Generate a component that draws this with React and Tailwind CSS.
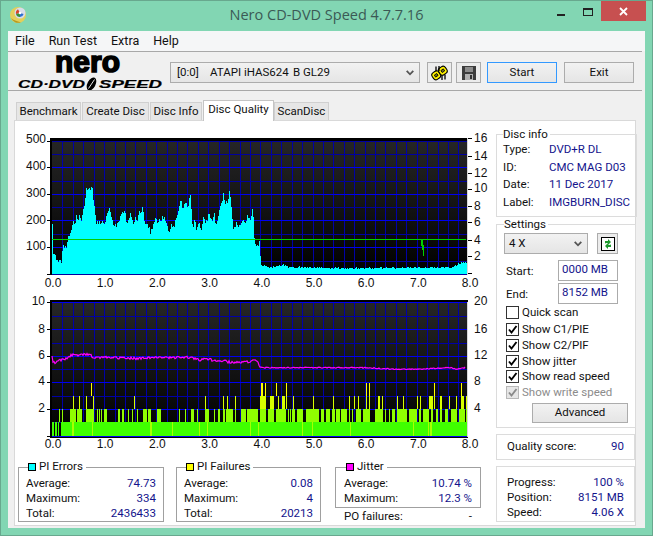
import React from "react";

function rng(seed) {
  let s = seed;
  return () => {
    s = (s * 1664525 + 1013904223) % 4294967296;
    return s / 4294967296;
  };
}
function interp(pts, x) {
  if (x <= pts[0][0]) return pts[0][1];
  for (let i = 1; i < pts.length; i++) {
    if (x <= pts[i][0]) {
      const [a, b] = pts[i - 1];
      const [c, d] = pts[i];
      return b + ((d - b) * (x - a)) / (c - a || 1);
    }
  }
  return pts[pts.length - 1][1];
}

const cyanA = [[110,275],[112,275],[114,380],[118,385],[122,395],[126,405],[130,408],[136,410],[140,415],[144,355],[148,375],[152,370],[156,360],[160,335],[165,330],[170,310],[176,292],[182,295],[186,268],[190,295],[194,265],[198,295],[202,275],[206,245],[210,235],[214,183],[218,200],[224,195],[228,202],[232,180],[236,235],[240,258],[244,300],[250,290],[256,300],[262,290],[270,293],[276,265],[282,250],[288,270],[294,298],[298,310],[304,300],[312,288],[320,265],[326,262],[332,262],[336,298],[342,275],[350,268],[356,295],[362,280],[368,288],[374,262],[380,268],[384,245],[390,300],[396,303],[402,305],[408,325],[414,300],[424,280],[430,292],[440,280],[450,275],[456,302],[462,328],[468,304],[478,300],[484,282],[490,255],[498,226],[504,258],[510,240],[520,240],[526,210],[530,255],[534,320],[538,285],[544,310],[552,285],[558,320],[566,280],[574,290],[582,268],[590,290],[598,268],[604,305],[612,265],[620,240],[626,205],[632,235],[638,230],[644,200],[650,245],[654,312],[660,310],[664,288],[672,310],[680,295],[690,290],[700,270],[706,285],[714,240],[718,345],[724,355],[730,360],[734,345],[738,415],[745,420],[750,425]];
const cyanB = [[0,290],[10,240],[14,350],[20,355],[28,360],[32,412],[45,420],[55,428],[100,420],[115,426],[300,430],[450,428],[560,428],[610,426],[635,412],[650,415],[655,415]];

function cyanPath() {
  const r = rng(17);
  const pts = [...cyanA.map(([a, b]) => [15 + a / 3, 125 + b / 3]), ...cyanB.map(([a, b]) => [250 + a / 3, 125 + b / 3])];
  let d = "M52 274";
  for (let x = 52; x < 468; x++) {
    const y = Math.round(interp(pts, x + 0.5) + (r() - 0.5) * (x > 262 ? 1.6 : 5));
    d += `V${y}H${x + 1}`;
  }
  return d + "V274Z";
}

const magA = [[110,195],[114,215],[120,218],[130,212],[150,208],[165,198],[175,192],[190,195],[215,192],[228,195],[235,205],[260,203],[300,203],[360,205],[420,203],[480,203],[530,202],[550,210],[580,207],[600,213],[625,212],[650,218],[700,215],[725,210],[735,232],[750,234]];
const magB = [[0,212],[22,210],[30,232],[60,233],[200,233],[350,233],[400,236],[460,238],[520,237],[600,233],[620,237],[648,232]];
function magPath() {
  const r = rng(5);
  const pts = [...magA.map(([a, b]) => [15 + a / 3, 290 + b / 3]), ...magB.filter((p) => p[0] > 10).map(([a, b]) => [250 + a / 3, 290 + b / 3])];
  let d = "";
  for (let x = 52; x < 466; x++) {
    const amp = x < 262 ? 2.4 : 1;
    const y = interp(pts, x) + (r() - 0.5) * amp;
    d += `${x === 52 ? "M" : "L"}${x} ${y.toFixed(1)}`;
  }
  return d;
}

const L2a = [[132,135],[141,144],[164,182],[186,200],[213,237],[246,249],[252,255],[258,261],[267,276],[309,315],[321,327],[339,342],[351,354],[366,369],[384,396],[399,408],[426,438],[492,495],[510,513],[528,537],[546,549],[570,582],[597,600],[609,615],[624,630],[633,654],[660,663],[678,693],[696,705],[711,717],[723,726],[735,750]];
const L3a = [[174,177],[192,195],[213,216],[234,237],[357,360],[570,573],[624,627],[636,639],[660,663],[735,750]];
const L4a = [[228,231],[738,744]];
const L2b = [[0,24],[30,39],[42,48],[54,72],[78,108],[114,117],[120,123],[126,135],[141,159],[168,207],[213,222],[228,240],[246,255],[258,270],[273,291],[297,300],[306,309],[318,333],[339,360],[375,399],[405,408],[417,420],[426,435],[441,471],[477,501],[507,513],[519,537],[543,549],[558,564],[570,576],[585,595],[603,621],[627,645],[648,654]];
const L3b = [[30,39],[42,48],[60,72],[84,87],[96,105],[108,111],[129,132],[189,192],[249,252],[297,300],[312,315],[324,327],[348,351],[357,360],[384,390],[396,399],[441,444],[459,462],[501,504],[510,513],[537,549],[552,555],[570,576],[597,600],[618,621],[633,642],[648,651]];
const L4b = [[33,39],[45,48],[78,81],[108,111],[348,351],[357,360],[552,555],[633,636]];

function Bars({ a, b, y, h, fill }) {
  return (
    <g fill={fill} shapeRendering="crispEdges">
      {a.map(([s, e], i) => (
        <rect key={"a" + i} x={Math.round(15 + s / 3)} y={y} width={Math.max(1, Math.round((e - s) / 3))} height={h} />
      ))}
      {b.map(([s, e], i) => (
        <rect key={"b" + i} x={Math.round(250 + s / 3)} y={y} width={Math.max(1, Math.round((e - s) / 3))} height={h} />
      ))}
    </g>
  );
}

function Grid({ id, ys }) {
  const xs = [];
  for (let i = 1; i < 40; i++) xs.push(52 + i * 10.42);
  return (
    <g shapeRendering="crispEdges">
      {xs.map((x) => (
        <line key={x} x1={Math.round(x)} x2={Math.round(x)} y1={ys[0]} y2={ys[ys.length - 1]} stroke="#0000a8" />
      ))}
      {ys.map((y, i) => (
        <line key={y} x1="52" x2="468" y1={y} y2={y} stroke={id === "a" ? (i % 2 === 0 && i > 0 && i < 10 ? "#0000f0" : "#0000a0") : i % 2 === 0 ? "#0000f0" : "#0000a8"} />
      ))}
    </g>
  );
}

function AxisText({ x, y, anchor = "start", children }) {
  return (
    <text x={x} y={y} textAnchor={anchor} dominantBaseline="central" fontSize="12" fill="#111" fontFamily="'Liberation Sans', Arial, sans-serif">
      {children}
    </text>
  );
}

const xLabels = ["0.0", "1.0", "2.0", "3.0", "4.0", "5.0", "6.0", "7.0"];

function Chart1() {
  const ys = [141, 154, 167, 181, 194, 207, 220, 234, 247, 261, 274];
  return (
    <svg viewBox="15 121 478 172" className="block h-[172px] w-[478px]">
      <defs>
        <linearGradient id="bgA" x1="0" y1="0" x2="0" y2="1">
          <stop offset="0" stopColor="#262626" />
          <stop offset="1" stopColor="#000" />
        </linearGradient>
      </defs>
      <rect x="50" y="138" width="418" height="137" fill="#000" shapeRendering="crispEdges" />
      <rect x="52" y="141" width="416" height="133" fill="url(#bgA)" shapeRendering="crispEdges" />
      <Grid id="a" ys={ys} />
      <path d={cyanPath()} fill="#00ffff" shapeRendering="crispEdges" />
      <rect x="52" y="239" width="414" height="1" fill="#00d000" shapeRendering="crispEdges" />
      <path d="M421 239h2v6h1v11h-1v-6h-1v-4h-1z" fill="#00d000" shapeRendering="crispEdges" />
      <rect x="467" y="138" width="1" height="137" fill="#d8d8d8" shapeRendering="crispEdges" />
      <g stroke="#000" shapeRendering="crispEdges">
        {[141, 167, 194, 220, 247, 274].map((y) => <line key={y} x1="47" x2="50" y1={y} y2={y} />)}
        {[138, 156, 173, 189, 206, 222, 240, 256, 273].map((y) => <line key={y} x1="468" x2="472" y1={y} y2={y} />)}
      </g>
      {[["500", 139], ["400", 166], ["300", 193], ["200", 220], ["100", 246]].map(([t, y]) => (
        <AxisText key={t} x={46} y={y} anchor="end">{t}</AxisText>
      ))}
      {[["16", 138], ["14", 156], ["12", 173], ["10", 188], ["8", 206], ["6", 222], ["4", 240], ["2", 256]].map(([t, y]) => (
        <AxisText key={t} x={474} y={y}>{t}</AxisText>
      ))}
      {xLabels.map((t, i) => (
        <AxisText key={t} x={53 + i * 52.2} y={283} anchor="middle">{t}</AxisText>
      ))}
      <AxisText x={470} y={283} anchor="middle">8.0</AxisText>
    </svg>
  );
}

function Chart2() {
  const ys = [302, 316, 329, 343, 356, 369, 382, 396, 409, 422, 436];
  return (
    <svg viewBox="15 293 478 167" className="block h-[167px] w-[478px]">
      <defs>
        <linearGradient id="bgB" x1="0" y1="0" x2="0" y2="1">
          <stop offset="0" stopColor="#262626" />
          <stop offset="1" stopColor="#000" />
        </linearGradient>
      </defs>
      <rect x="50" y="300" width="418" height="138" fill="#000" shapeRendering="crispEdges" />
      <rect x="52" y="303" width="416" height="133" fill="url(#bgB)" shapeRendering="crispEdges" />
      <Grid id="b" ys={ys} />
      <Bars a={L4a} b={L4b} y={383} h={13} fill="#ffff00" />
      <Bars a={L3a} b={L3b} y={396} h={13} fill="#d8ff00" />
      <Bars a={L2a} b={L2b} y={409} h={13} fill="#90ff00" />
      <g fill="#40ff00" shapeRendering="crispEdges">
        <rect x="52" y="422" width="2" height="14" />
        <rect x="55" y="422" width="2" height="14" />
        <rect x="58" y="422" width="1" height="14" />
        <rect x="61" y="422" width="407" height="14" />
      </g>
      <g fill="#a8ff00" shapeRendering="crispEdges">
        {[72, 73, 92, 150, 151, 172, 199, 207, 250, 258, 302, 312, 350, 430, 431, 413, 428].map((x) => (
          <rect key={x} x={x} y="422" width="1" height="14" />
        ))}
      </g>
      <path d={magPath()} fill="none" stroke="#ff00ff" strokeWidth="1.2" />
      <rect x="467" y="302" width="1" height="135" fill="#d8d8d8" shapeRendering="crispEdges" />
      <g stroke="#000" shapeRendering="crispEdges">
        {ys.filter((_, i) => i % 2 === 0).map((y) => <line key={y} x1="47" x2="50" y1={y} y2={y} />)}
      </g>
      {[["10", 301], ["8", 329], ["6", 355], ["4", 381], ["2", 408]].map(([t, y]) => (
        <AxisText key={t} x={45} y={y} anchor="end">{t}</AxisText>
      ))}
      {[["20", 301], ["16", 329], ["12", 355], ["8", 381], ["4", 408]].map(([t, y]) => (
        <AxisText key={t} x={474} y={y}>{t}</AxisText>
      ))}
      {xLabels.map((t, i) => (
        <AxisText key={t} x={53 + i * 52.2} y={444} anchor="middle">{t}</AxisText>
      ))}
      <AxisText x={470} y={444} anchor="middle">8.0</AxisText>
    </svg>
  );
}

function Logo() {
  return (
    <svg viewBox="15 52 155 38" className="-mt-[3px] block h-[38px] w-[155px] shrink-0 self-start overflow-visible">
      <text x="55" y="72" fontSize="30" fontWeight="700" stroke="#000" strokeWidth="1.6" textLength="65" lengthAdjust="spacingAndGlyphs" fontFamily="'Liberation Sans', Arial, sans-serif">nero</text>
      <text x="18" y="88" fontSize="11.5" fontWeight="700" fontStyle="italic" stroke="#000" strokeWidth="0.2" textLength="67" lengthAdjust="spacingAndGlyphs" fontFamily="'Liberation Sans', Arial, sans-serif">CD·DVD</text>
      <text x="99" y="88" fontSize="11.5" fontWeight="700" fontStyle="italic" stroke="#000" strokeWidth="0.2" textLength="63" lengthAdjust="spacingAndGlyphs" fontFamily="'Liberation Sans', Arial, sans-serif">SPEED</text>
      <ellipse cx="91.5" cy="84" rx="4" ry="7" transform="rotate(28 91.5 84)" fill="#000" />
      <path d="M88.5 88.5 L94.5 79.5" stroke="#fff" strokeWidth="0.9" />
    </svg>
  );
}

function TitleIcon() {
  return (
    <svg viewBox="0 0 18 18" className="h-[18px] w-[18px]">
      <circle cx="9" cy="9" r="8" fill="#e3cf5a" />
      <path d="M2 12a8 8 0 0 0 10 4.4C8 15.5 4 14 2 12z" fill="#b59a20" />
      <circle cx="11" cy="7" r="5.5" fill="#d8dcea" />
      <path d="M11 7 L9 3.2 A4.5 4.5 0 0 0 7 8z" fill="#d8432a" />
      <path d="M11 7 L14.6 8 A4 4 0 0 1 11 11z" fill="#2d6fd0" />
      <path d="M11 7 L7 8 A4 4 0 0 0 11 11z" fill="#3a8f3a" />
      <circle cx="11" cy="7" r="1.3" fill="#fff" />
    </svg>
  );
}

function GearIcon() {
  return (
    <svg viewBox="0 0 17 16" className="h-[16px] w-[17px]">
      <g transform="rotate(-35 8.5 8)">
        <g fill="#fff200" stroke="#000" strokeWidth="1.1">
          <rect x="0.5" y="4" width="8" height="8" rx="3" />
          <rect x="8.5" y="4" width="8" height="8" rx="3" />
        </g>
        <g fill="#6b6b20" stroke="#000" strokeWidth="0.8">
          <rect x="3" y="6.8" width="3" height="2.4" />
          <rect x="11" y="6.8" width="3" height="2.4" />
        </g>
      </g>
      <path d="M5 1.5 v5 M8 1 v5 M11 10 v5 M14 9.5 v5" stroke="#000" strokeWidth="1.3" />
    </svg>
  );
}

function FloppyIcon() {
  return (
    <svg viewBox="0 0 14 14" className="h-[14px] w-[14px]" shapeRendering="crispEdges">
      <path d="M0 0h13l1 1v13H0z" fill="#3c3c3c" />
      <rect x="3" y="1" width="8" height="5" fill="#8c8c8c" />
      <rect x="3" y="8" width="8" height="6" fill="#b0b0b0" />
      <rect x="8" y="9" width="2" height="4" fill="#333" />
    </svg>
  );
}

function RefreshIcon() {
  return (
    <svg viewBox="0 0 14 14" className="h-[14px] w-[14px]">
      <rect x="0.5" y="0.5" width="13" height="13" fill="#fff" stroke="#000" />
      <path d="M4 6.5V4h3V2l3 3-3 3V6H5.5" fill="#1f9a2e" />
      <path d="M10 7.5V10H7v2L4 9l3-3v2h1.5" fill="#1f9a2e" />
    </svg>
  );
}

function Chevron() {
  return (
    <svg viewBox="0 0 8 6" className="h-[6px] w-[8px]">
      <path d="M0.7 0.8 4 4.3 7.3 0.8" fill="none" stroke="#555" strokeWidth="1.8" />
    </svg>
  );
}

function Check({ checked, disabled }) {
  return (
    <span className={`flex h-[13px] w-[13px] shrink-0 items-center justify-center border ${disabled ? "border-[#b8b8b8] bg-[#e6e6e6]" : "border-[#333] bg-white"}`}>
      {checked && (
        <svg viewBox="0 0 11 11" className="h-[11px] w-[11px]">
          <path d="M2 5.5 4.5 8.5 9.5 2" fill="none" stroke={disabled ? "#8a8a8a" : "#000"} strokeWidth="1.9" />
        </svg>
      )}
    </span>
  );
}

function CheckRow({ label, checked, disabled }) {
  return (
    <div className={`flex h-[15.75px] items-center gap-[3px] ${disabled ? "text-[#8c8c8c]" : "text-[#111]"}`}>
      <Check checked={checked} disabled={disabled} />
      <span>{label}</span>
    </div>
  );
}

function Stat({ label, value }) {
  return (
    <div className="flex h-[15px] items-center justify-between">
      <span>{label}</span>
      <span className="text-[#14148c]">{value}</span>
    </div>
  );
}

function StatBox({ title, swatch, className, children }) {
  return (
    <fieldset className={`border border-[#a0a0a0] pt-[2px] ${className}`}>
      <legend className="ml-[2px] flex h-[14px] items-center gap-[3px] pr-[3px] pl-0">
        <span className={`h-[8px] w-[8px] border border-black ${swatch}`} />
        <span>{title}</span>
      </legend>
      {children}
    </fieldset>
  );
}

function Group({ title, className, legend, children }) {
  return (
    <fieldset className={`border border-[#dcdcdc] ${className}`}>
      <legend className={`h-[14px] pr-[2px] leading-[14px] text-[#111] ${legend}`}>{title}</legend>
      {children}
    </fieldset>
  );
}

function Info({ label, value }) {
  return (
    <div className="flex h-[17.5px] items-center">
      <span className="w-[46px] text-[#111]">{label}</span>
      <span className="whitespace-nowrap text-[#14148c]">{value}</span>
    </div>
  );
}

const tabs = [
  ["Benchmark", "w-[65px]"],
  ["Create Disc", "w-[67px]"],
  ["Disc Info", "w-[52px]"],
];

export default function App() {
  return (
    <div className="flex h-[536px] w-[653px] flex-col overflow-hidden border border-[#68a88e] bg-[#82d6b3] font-['Roboto','Liberation_Sans',sans-serif] text-[11.5px] text-[#111]">
      <div className="relative flex h-[30px] shrink-0 items-center justify-center pb-[3px]">
        <span className="absolute top-[5px] left-[8px]"><TitleIcon /></span>
        <span className="font-['Open_Sans',sans-serif] text-[14.5px] text-[#3b5a55]">Nero CD-DVD Speed 4.7.7.16</span>
        <div className="absolute top-0 right-[6px] flex items-start">
          <span className="mt-[13px] mr-[18px] h-[2px] w-[8px] bg-[#222]" />
          <span className="mt-[7px] mr-[8px] h-[8px] w-[10px] border border-t-2 border-[#222]" />
          <span className="flex h-[20px] w-[45px] items-center justify-center bg-[#c75050]">
            <svg viewBox="0 0 9 9" className="h-[9px] w-[9px]"><path d="M1 1 8 8M8 1 1 8" stroke="#fff" strokeWidth="1.8" /></svg>
          </span>
        </div>
      </div>

      <div className="mx-[7px] flex h-[497px] flex-col bg-[#f0f0f0]">
        <div className="flex h-[20px] items-center gap-[14px] bg-[#f5f6f7] pl-[7px] text-[12.5px] text-[#111]">
          <span>File</span>
          <span>Run Test</span>
          <span>Extra</span>
          <span>Help</span>
        </div>
        <div className="mr-[3px] h-px bg-[#a8a8a8]" />
        <div className="flex h-[38px] items-center pt-[3px] pl-[7px]">
          <Logo />
          <div className="flex h-[21px] w-[250px] items-center border border-[#acacac] bg-gradient-to-b from-[#f2f2f2] to-[#e5e5e5] pr-[5px] pl-[6px]">
            <span className="w-[33px]">[0:0]</span>
            <span className="w-[83px]">ATAPI iHAS624</span>
            <span className="flex-1">B GL29</span>
            <Chevron />
          </div>
          <button className="ml-[7px] flex h-[21px] w-[25px] items-center justify-center border border-[#acacac] bg-[#ececec]"><GearIcon /></button>
          <button className="ml-[4px] flex h-[21px] w-[25px] items-center justify-center border border-[#acacac] bg-[#ececec]"><FloppyIcon /></button>
          <button className="ml-[6px] h-[21px] w-[70px] border border-[#3399ff] bg-gradient-to-b from-[#f2f2f2] to-[#e5e5e5]">Start</button>
          <button className="ml-[7px] h-[21px] w-[70px] border border-[#acacac] bg-gradient-to-b from-[#f2f2f2] to-[#e5e5e5]">Exit</button>
        </div>
        <div className="mr-[3px] h-px bg-[#a8a8a8]" />

        <div className="flex h-[29px] items-end pl-[8px]">
          {tabs.map(([t, w]) => (
            <div key={t} className={`mr-px flex h-[18px] items-center justify-center border border-b-0 border-[#d0d0d0] bg-[#e6e6e6] ${w}`}>{t}</div>
          ))}
          <div className="z-10 -mb-px flex h-[21px] w-[71px] items-center justify-center border border-b-0 border-[#c4c4c4] bg-white pb-[2px]">Disc Quality</div>
          <div className="flex h-[18px] w-[55px] items-center justify-center border border-b-0 border-[#d0d0d0] bg-[#e6e6e6]">ScanDisc</div>
        </div>

        <div className="ml-[6px] flex h-[406px] w-[622px] border border-[#d9d9d9] bg-white">
          <div className="w-[478px] shrink-0">
            <Chart1 />
            <Chart2 />
            <div className="flex pl-[3px]">
              <StatBox title="PI Errors" swatch="bg-[#00ffff]" className="h-[62px] w-[146px] px-[7px]">
                <Stat label="Average:" value="74.73" />
                <Stat label="Maximum:" value="334" />
                <Stat label="Total:" value="2436433" />
              </StatBox>
              <StatBox title="PI Failures" swatch="bg-[#ffff00]" className="ml-[12px] h-[62px] w-[145px] px-[7px]">
                <Stat label="Average:" value="0.08" />
                <Stat label="Maximum:" value="4" />
                <Stat label="Total:" value="20213" />
              </StatBox>
              <div className="ml-[14px] w-[146px]">
                <StatBox title="Jitter" swatch="bg-[#ff00ff]" className="h-[48px] w-[146px] px-[8px]">
                  <Stat label="Average:" value="10.74 %" />
                  <Stat label="Maximum:" value="12.3 %" />
                </StatBox>
                <div className="mt-[2px] flex h-[14px] items-center justify-between px-[9px]">
                  <span>PO failures:</span>
                  <span>-</span>
                </div>
              </div>
            </div>
          </div>

          <div className="ml-[3px] flex w-[139px] flex-col pt-[6px]">
            <Group title="Disc info" legend="ml-0" className="h-[90px] px-[6px]">
              <Info label="Type:" value="DVD+R DL" />
              <Info label="ID:" value="CMC MAG D03" />
              <Info label="Date:" value="11 Dec 2017" />
              <Info label="Label:" value="IMGBURN_DISC" />
            </Group>
            <Group title="Settings" legend="ml-0" className="h-[211px] px-[7px]">
              <div className="mt-[2px] flex items-start">
                <div className="flex h-[21px] w-[84px] items-center justify-between border border-[#acacac] bg-gradient-to-b from-[#f2f2f2] to-[#e5e5e5] pr-[5px] pl-[4px]">
                  <span>4 X</span>
                  <Chevron />
                </div>
                <div className="ml-[9px] flex h-[21px] w-[21px] items-center justify-center border border-[#acacac] bg-[#ececec]"><RefreshIcon /></div>
              </div>
              <div className="mt-[6px] flex h-[21px] items-center pl-[2px]">
                <span className="w-[52px] pt-[3px]">Start:</span>
                <span className="flex h-[21px] w-[60px] items-center border border-[#ababab] pb-[2px] pl-[3px] text-[#14148c]">0000 MB</span>
              </div>
              <div className="mt-[2px] flex h-[21px] items-center pl-[2px]">
                <span className="w-[52px] pt-[3px]">End:</span>
                <span className="flex h-[21px] w-[60px] items-center border border-[#ababab] pb-[2px] pl-[3px] text-[#14148c]">8152 MB</span>
              </div>
              <div className="mt-[1px] pl-[2px]">
                <CheckRow label="Quick scan" />
                <div className="h-[1px]" />
                <CheckRow label="Show C1/PIE" checked />
                <CheckRow label="Show C2/PIF" checked />
                <CheckRow label="Show jitter" checked />
                <CheckRow label="Show read speed" checked />
                <CheckRow label="Show write speed" checked disabled />
              </div>
              <button className="mt-[2px] ml-[28px] h-[20px] w-[96px] border border-[#acacac] bg-gradient-to-b from-[#f2f2f2] to-[#e5e5e5]">Advanced</button>
            </Group>
            <div className="mt-[6px] flex h-[26px] items-center justify-between border border-[#dcdcdc] px-[10px]">
              <span>Quality score:</span>
              <span className="text-[#14148c]">90</span>
            </div>
            <div className="mt-[6px] flex h-[56px] flex-col justify-center border border-[#dcdcdc] px-[10px] pt-[8px]">
              <Stat label="Progress:" value="100 %" />
              <Stat label="Position:" value="8151 MB" />
              <Stat label="Speed:" value="4.06 X" />
            </div>
          </div>
        </div>
      </div>
    </div>
  );
}
